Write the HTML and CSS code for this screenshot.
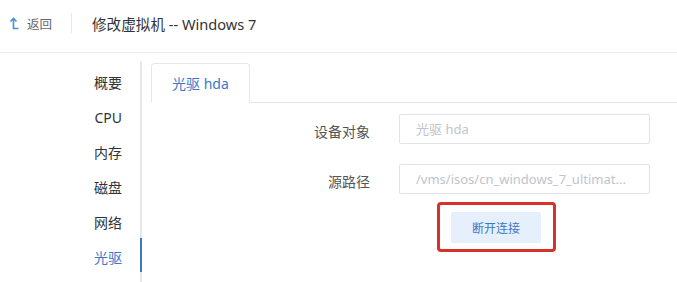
FILE: index.html
```html
<!DOCTYPE html>
<html lang="zh-CN">
<head>
    <meta charset="UTF-8">
    <meta name="viewport" content="width=device-width, initial-scale=1.0">
    <title>修改虚拟机 -- Windows 7</title>
    <link rel="stylesheet" href="styles.css">
</head>
<body>
    <header class="page-header">
        <a href="#" class="back-link">
            <svg class="back-icon" width="10" height="13" viewBox="0 0 10 13">
                <path d="M1.5 4.5 L4.5 1.5 L7.5 4.5 M4.5 1.5 V11.5 H9.5" fill="none" stroke="#4a8fd8" stroke-width="1.6"/>
            </svg>
            <span>返回</span>
        </a>
        <span class="divider"></span>
        <h1 class="page-title">修改虚拟机 -- Windows 7</h1>
    </header>

    <div class="main">
        <nav class="sidebar">
            <a href="#" class="nav-item">概要</a>
            <a href="#" class="nav-item">CPU</a>
            <a href="#" class="nav-item">内存</a>
            <a href="#" class="nav-item">磁盘</a>
            <a href="#" class="nav-item">网络</a>
            <a href="#" class="nav-item active">光驱</a>
        </nav>

        <section class="content">
            <div class="tabs">
                <div class="tab active">光驱 hda</div>
            </div>

            <div class="form">
                <div class="form-row">
                    <label class="form-label">设备对象</label>
                    <div class="form-input">光驱 hda</div>
                </div>
                <div class="form-row">
                    <label class="form-label">源路径</label>
                    <div class="form-input">/vms/isos/cn_windows_7_ultimat...</div>
                </div>
                <div class="form-actions">
                    <div class="highlight">
                        <button class="btn-disconnect">断开连接</button>
                    </div>
                </div>
            </div>
        </section>
    </div>
</body>
</html>
```

FILE: styles.css
```css
/* Reset */
* {
    margin: 0;
    padding: 0;
    box-sizing: border-box;
}

body {
    font-family: "Noto Sans", "Noto Sans CJK SC", sans-serif;
    background: #fff;
    color: #333;
    overflow: hidden;
}

a {
    text-decoration: none;
}

/* Header */
.page-header {
    height: 53px;
    display: flex;
    align-items: center;
    border-bottom: 1px solid #ebeef5;
    padding-left: 9px;
    padding-bottom: 6px;
}

.back-link {
    display: flex;
    align-items: center;
    color: #666;
    font-size: 12.5px;
}

.back-icon {
    margin-right: 8px;
    margin-top: 1px;
}

.divider {
    width: 1px;
    height: 20px;
    background: #e8e8e8;
    margin-left: 19px;
}

.page-title {
    font-size: 14.6px;
    font-weight: normal;
    color: #333;
    margin-left: 20px;
}

/* Main layout */
.main {
    display: flex;
    margin-top: 8px;
    height: 230px;
}

.sidebar {
    width: 142px;
    border-right: 2px solid #e4e7ed;
    padding-top: 4px;
    display: flex;
    flex-direction: column;
}

.nav-item {
    position: relative;
    height: 35px;
    line-height: 35px;
    text-align: right;
    padding-right: 18px;
    font-size: 14px;
    color: #333;
}

.nav-item.active {
    color: #3a78c9;
}

.nav-item.active::after {
    content: '';
    position: absolute;
    right: -2px;
    top: -2px;
    width: 2px;
    height: 34px;
    background: #3a78c9;
}

/* Content */
.content {
    flex: 1;
    padding-left: 9px;
    padding-top: 2px;
}

.tabs {
    display: flex;
    border-bottom: 1px solid #e4e7ed;
}

.tab {
    height: 40px;
    line-height: 39px;
    padding: 0 20px;
    font-size: 14px;
    color: #3a78c9;
    border: 1px solid #e4e7ed;
    border-bottom: 1px solid #fff;
    border-radius: 4px 4px 0 0;
    margin-bottom: -1px;
    background: #fff;
}

/* Form */
.form {
    padding-top: 11px;
}

.form-row {
    display: flex;
    align-items: center;
    margin-bottom: 20px;
}

.form-label {
    width: 219px;
    text-align: right;
    font-size: 14px;
    color: #555;
    margin-right: 29px;
    margin-top: 3px;
}

.form-input {
    width: 251px;
    height: 30px;
    line-height: 28px;
    border: 1px solid #e0e3e8;
    border-radius: 2px;
    padding: 0 10px 0 16px;
    font-size: 13px;
    color: #c0c4cc;
    white-space: nowrap;
    overflow: hidden;
}

.form-actions {
    display: flex;
    padding-left: 286px;
    margin-top: -12px;
}

.highlight {
    border: 3px solid #d8312a;
    border-radius: 4px;
    padding: 7px 12px 6px 11px;
}

.btn-disconnect {
    width: 90px;
    height: 31px;
    border: none;
    border-radius: 2px;
    background: #e6effc;
    color: #3a78c9;
    font-family: inherit;
    font-size: 12px;
    cursor: pointer;
}
```
